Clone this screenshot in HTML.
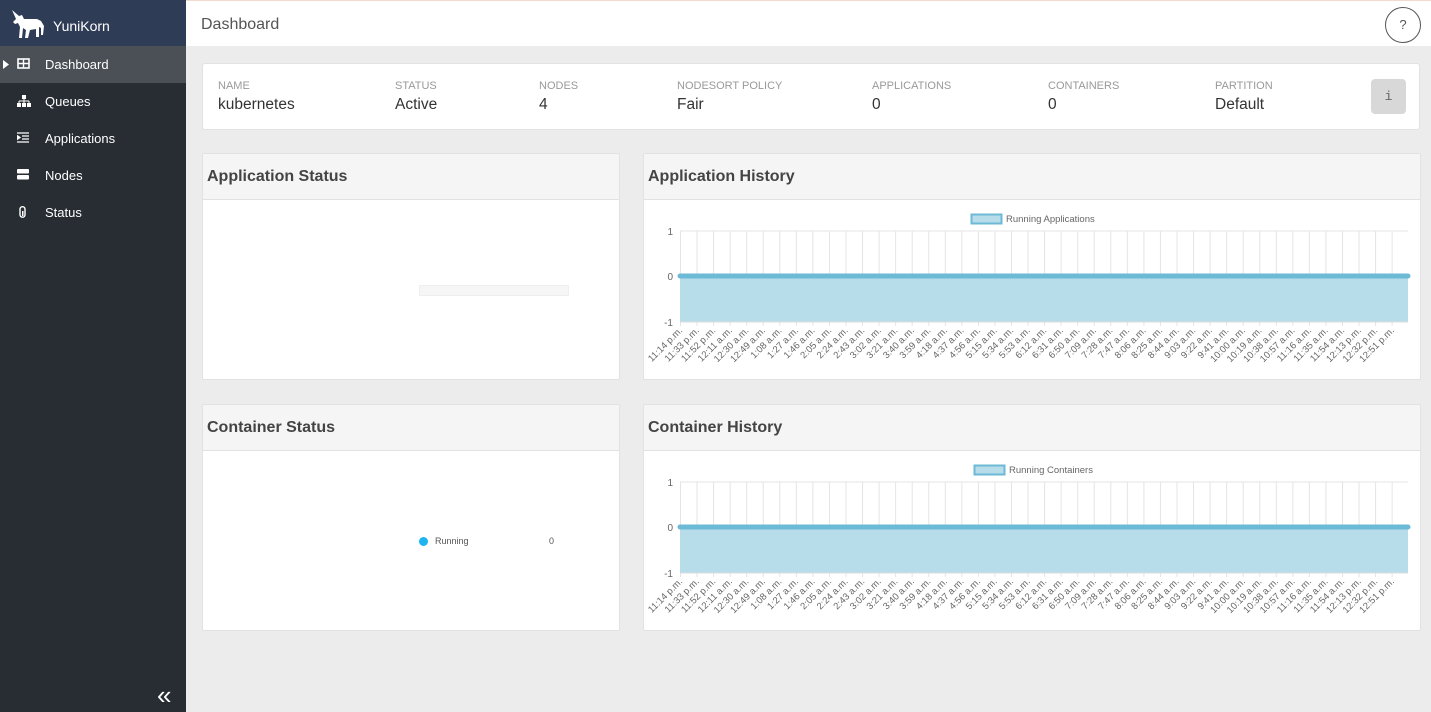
<!DOCTYPE html>
<html><head><meta charset="utf-8"><style>
*{box-sizing:border-box;margin:0;padding:0}
body{width:1431px;height:712px;overflow:hidden;background:#ececec;font-family:"Liberation Sans",Arial,sans-serif;position:relative}
.abs{position:absolute}
#side{left:0;top:0;width:186px;height:712px;background:#282c33}
#brand{left:0;top:0;width:186px;height:46px;background:#2f3c56;color:#fff;font-size:14px}
.item{position:absolute;left:0;width:186px;height:37px;color:#fff;font-size:13px;line-height:37px}
.item span{position:absolute;left:45px}
.item svg{position:absolute;left:17px;top:12px}
#top{left:186px;top:0;width:1245px;height:46px;background:#fff;border-top:1px solid #f3d9d0}
.card{position:absolute;background:#fff;border:1px solid #e2e2e2;border-radius:2px}
.hdr{position:absolute;left:0;top:0;right:0;height:46px;background:#f5f5f5;border-bottom:1px solid #e2e2e2;font-weight:bold;font-size:16px;color:#444;line-height:46px;padding-left:4px}
.lb{position:absolute;top:16px;font-size:11px;color:#999}
.vl{position:absolute;top:32px;font-size:15.5px;color:#333}
svg text{font-family:"Liberation Sans",Arial,sans-serif}
</style></head><body>
<div id="side" class="abs">
 <div id="brand" class="abs">
  <svg class="abs" style="left:10px;top:9px" width="36" height="30" viewBox="0 0 36 30"><path d="M2 1 L9 7 L12 6 L14 10 L27 10 L31 12 L34 17 L33 26 L31 26 L31 19 L29 18 L29 28 L26 28 L26 20 L20 21 L18 29 L15 29 L16 21 L13 19 L12 29 L9 29 L10 18 L8 14 L5 15 L3 13 L6 10 Z" fill="#fff"/></svg>
  <span class="abs" style="left:53px;top:18px">YuniKorn</span>
 </div>
 <div class="item" style="top:46px;background:#4b4f56"><svg style="left:3px;top:14px" width="6" height="9"><path d="M0 0 L6 4.5 L0 9Z" fill="#fff"/></svg><svg width="13" height="11"><rect x="1" y="1" width="11" height="9" fill="none" stroke="#fff" stroke-width="1.6"/><path d="M6.5 1V10M1 5.5H12" stroke="#fff" stroke-width="1.4"/></svg><span>Dashboard</span></div>
 <div class="item" style="top:83px"><svg width="14" height="12"><rect x="5" y="0" width="4" height="4" fill="#fff"/><path d="M7 4V6M2 6H12M2 6V8M12 6V8M7 6V8" stroke="#fff"/><rect x="0" y="8" width="4" height="4" fill="#fff"/><rect x="5" y="8" width="4" height="4" fill="#fff"/><rect x="10" y="8" width="4" height="4" fill="#fff"/></svg><span>Queues</span></div>
 <div class="item" style="top:120px"><svg width="12" height="11"><path d="M0 1H12M5 4H12M5 7H12M0 10H12M0 3.5L3 5.5L0 7.5Z" stroke="#fff" stroke-width="1.3" fill="#fff"/></svg><span>Applications</span></div>
 <div class="item" style="top:157px"><svg width="12" height="11"><rect x="0" y="0" width="12" height="4.5" rx="1" fill="#fff"/><rect x="0" y="6" width="12" height="4.5" rx="1" fill="#fff"/></svg><span>Nodes</span></div>
 <div class="item" style="top:194px"><svg width="8" height="12" style="left:19px"><rect x="1" y="0.7" width="5" height="10.5" rx="2.5" fill="none" stroke="#fff" stroke-width="1.4"/><rect x="3" y="5" width="1.5" height="5" fill="#fff"/></svg><span>Status</span></div>
 <div class="abs" style="left:157px;top:682px;color:#fff;font-size:26px;line-height:26px">«</div>
</div>
<div id="top" class="abs">
 <span class="abs" style="left:15px;top:15px;font-size:16px;color:#555">Dashboard</span>
 <div class="abs" style="left:1199px;top:6px;width:36px;height:36px;border:1px solid #555;border-radius:50%;text-align:center;line-height:34px;font-size:13px;color:#555">?</div>
</div>
<div class="card" style="left:202px;top:63px;width:1218px;height:67px;border-radius:3px">
 <div class="lb" style="left:15px">NAME</div><div class="vl" style="left:15px">kubernetes</div>
 <div class="lb" style="left:192px">STATUS</div><div class="vl" style="left:192px">Active</div>
 <div class="lb" style="left:336px">NODES</div><div class="vl" style="left:336px">4</div>
 <div class="lb" style="left:474px">NODESORT POLICY</div><div class="vl" style="left:474px">Fair</div>
 <div class="lb" style="left:669px">APPLICATIONS</div><div class="vl" style="left:669px">0</div>
 <div class="lb" style="left:845px">CONTAINERS</div><div class="vl" style="left:845px">0</div>
 <div class="lb" style="left:1012px">PARTITION</div><div class="vl" style="left:1012px">Default</div>
 <div class="abs" style="left:1168px;top:15px;width:35px;height:35px;background:#d8d8d8;border-radius:4px;text-align:center;line-height:35px;font-size:13px;color:#666;font-family:'Liberation Mono',monospace">i</div>
</div>
<div class="card" style="left:202px;top:153px;width:418px;height:227px"><div class="hdr">Application Status</div>
 <div class="abs" style="left:216px;top:131px;width:150px;height:11px;background:#f6f6f6;border:1px solid #eee"></div></div>
<div class="card" style="left:202px;top:404px;width:418px;height:227px"><div class="hdr">Container Status</div>
 <div class="abs" style="left:216px;top:132px;width:9px;height:9px;border-radius:50%;background:#1eb4f0"></div>
 <div class="abs" style="left:232px;top:131px;font-size:9px;color:#555">Running</div>
 <div class="abs" style="left:346px;top:131px;font-size:9px;color:#555">0</div></div>

<div class="card" style="left:643px;top:153px;width:778px;height:227px"><div class="hdr">Application History</div></div>
<div class="card" style="left:643px;top:404px;width:778px;height:227px"><div class="hdr">Container History</div></div>

<svg class="abs" style="left:643px;top:200px" width="778" height="180" id="c1">
<defs><pattern id="g" x="37" y="0" width="16.55" height="200" patternUnits="userSpaceOnUse"><line x1="0.5" y1="0" x2="0.5" y2="200" stroke="#e4e4e4"/></pattern></defs>
<rect x="37" y="31" width="728" height="95" fill="url(#g)"/>
<rect x="37" y="76" width="728" height="46" fill="#b7dcea"/>
<line x1="37" y1="31" x2="765" y2="31" stroke="#e6e6e6"/>
<line x1="37" y1="122" x2="765" y2="122" stroke="#ddd"/>
<line x1="37" y1="76" x2="765" y2="76" stroke="#6dbad6" stroke-width="5" stroke-linecap="round"/>
<g font-size="10" fill="#666" text-anchor="end"><text x="30" y="35">1</text><text x="30" y="80">0</text><text x="30" y="126">-1</text></g>
<rect x="328.5" y="14.5" width="30" height="9" fill="#b7dcea" stroke="#6dbad6" stroke-width="2"/>
<text x="363" y="22" font-size="9.5" fill="#666">Running Applications</text>
<g font-size="9.5" fill="#666" text-anchor="end">
<text transform="translate(40,131) rotate(-45)">11:14 p.m.</text>
<text transform="translate(56.6,131) rotate(-45)">11:33 p.m.</text>
<text transform="translate(73.1,131) rotate(-45)">11:52 p.m.</text>
<text transform="translate(89.7,131) rotate(-45)">12:11 a.m.</text>
<text transform="translate(106.2,131) rotate(-45)">12:30 a.m.</text>
<text transform="translate(122.8,131) rotate(-45)">12:49 a.m.</text>
<text transform="translate(139.3,131) rotate(-45)">1:08 a.m.</text>
<text transform="translate(155.9,131) rotate(-45)">1:27 a.m.</text>
<text transform="translate(172.4,131) rotate(-45)">1:46 a.m.</text>
<text transform="translate(189,131) rotate(-45)">2:05 a.m.</text>
<text transform="translate(205.5,131) rotate(-45)">2:24 a.m.</text>
<text transform="translate(222.1,131) rotate(-45)">2:43 a.m.</text>
<text transform="translate(238.6,131) rotate(-45)">3:02 a.m.</text>
<text transform="translate(255.2,131) rotate(-45)">3:21 a.m.</text>
<text transform="translate(271.7,131) rotate(-45)">3:40 a.m.</text>
<text transform="translate(288.3,131) rotate(-45)">3:59 a.m.</text>
<text transform="translate(304.8,131) rotate(-45)">4:18 a.m.</text>
<text transform="translate(321.4,131) rotate(-45)">4:37 a.m.</text>
<text transform="translate(337.9,131) rotate(-45)">4:56 a.m.</text>
<text transform="translate(354.5,131) rotate(-45)">5:15 a.m.</text>
<text transform="translate(371,131) rotate(-45)">5:34 a.m.</text>
<text transform="translate(387.6,131) rotate(-45)">5:53 a.m.</text>
<text transform="translate(404.1,131) rotate(-45)">6:12 a.m.</text>
<text transform="translate(420.7,131) rotate(-45)">6:31 a.m.</text>
<text transform="translate(437.2,131) rotate(-45)">6:50 a.m.</text>
<text transform="translate(453.8,131) rotate(-45)">7:09 a.m.</text>
<text transform="translate(470.3,131) rotate(-45)">7:28 a.m.</text>
<text transform="translate(486.9,131) rotate(-45)">7:47 a.m.</text>
<text transform="translate(503.4,131) rotate(-45)">8:06 a.m.</text>
<text transform="translate(520,131) rotate(-45)">8:25 a.m.</text>
<text transform="translate(536.5,131) rotate(-45)">8:44 a.m.</text>
<text transform="translate(553.1,131) rotate(-45)">9:03 a.m.</text>
<text transform="translate(569.6,131) rotate(-45)">9:22 a.m.</text>
<text transform="translate(586.2,131) rotate(-45)">9:41 a.m.</text>
<text transform="translate(602.7,131) rotate(-45)">10:00 a.m.</text>
<text transform="translate(619.3,131) rotate(-45)">10:19 a.m.</text>
<text transform="translate(635.8,131) rotate(-45)">10:38 a.m.</text>
<text transform="translate(652.4,131) rotate(-45)">10:57 a.m.</text>
<text transform="translate(668.9,131) rotate(-45)">11:16 a.m.</text>
<text transform="translate(685.5,131) rotate(-45)">11:35 a.m.</text>
<text transform="translate(702,131) rotate(-45)">11:54 a.m.</text>
<text transform="translate(718.6,131) rotate(-45)">12:13 p.m.</text>
<text transform="translate(735.1,131) rotate(-45)">12:32 p.m.</text>
<text transform="translate(751.7,131) rotate(-45)">12:51 p.m.</text>
</g>
</svg>

<svg class="abs" style="left:643px;top:451px" width="778" height="180">
<rect x="37" y="31" width="728" height="95" fill="url(#g)"/>
<rect x="37" y="76" width="728" height="46" fill="#b7dcea"/>
<line x1="37" y1="31" x2="765" y2="31" stroke="#e6e6e6"/>
<line x1="37" y1="122" x2="765" y2="122" stroke="#ddd"/>
<line x1="37" y1="76" x2="765" y2="76" stroke="#6dbad6" stroke-width="5" stroke-linecap="round"/>
<g font-size="10" fill="#666" text-anchor="end"><text x="30" y="35">1</text><text x="30" y="80">0</text><text x="30" y="126">-1</text></g>
<rect x="331.5" y="14.5" width="30" height="9" fill="#b7dcea" stroke="#6dbad6" stroke-width="2"/>
<text x="366" y="22" font-size="9.5" fill="#666">Running Containers</text>
<g font-size="9.5" fill="#666" text-anchor="end">
<text transform="translate(40,131) rotate(-45)">11:14 p.m.</text>
<text transform="translate(56.6,131) rotate(-45)">11:33 p.m.</text>
<text transform="translate(73.1,131) rotate(-45)">11:52 p.m.</text>
<text transform="translate(89.7,131) rotate(-45)">12:11 a.m.</text>
<text transform="translate(106.2,131) rotate(-45)">12:30 a.m.</text>
<text transform="translate(122.8,131) rotate(-45)">12:49 a.m.</text>
<text transform="translate(139.3,131) rotate(-45)">1:08 a.m.</text>
<text transform="translate(155.9,131) rotate(-45)">1:27 a.m.</text>
<text transform="translate(172.4,131) rotate(-45)">1:46 a.m.</text>
<text transform="translate(189,131) rotate(-45)">2:05 a.m.</text>
<text transform="translate(205.5,131) rotate(-45)">2:24 a.m.</text>
<text transform="translate(222.1,131) rotate(-45)">2:43 a.m.</text>
<text transform="translate(238.6,131) rotate(-45)">3:02 a.m.</text>
<text transform="translate(255.2,131) rotate(-45)">3:21 a.m.</text>
<text transform="translate(271.7,131) rotate(-45)">3:40 a.m.</text>
<text transform="translate(288.3,131) rotate(-45)">3:59 a.m.</text>
<text transform="translate(304.8,131) rotate(-45)">4:18 a.m.</text>
<text transform="translate(321.4,131) rotate(-45)">4:37 a.m.</text>
<text transform="translate(337.9,131) rotate(-45)">4:56 a.m.</text>
<text transform="translate(354.5,131) rotate(-45)">5:15 a.m.</text>
<text transform="translate(371,131) rotate(-45)">5:34 a.m.</text>
<text transform="translate(387.6,131) rotate(-45)">5:53 a.m.</text>
<text transform="translate(404.1,131) rotate(-45)">6:12 a.m.</text>
<text transform="translate(420.7,131) rotate(-45)">6:31 a.m.</text>
<text transform="translate(437.2,131) rotate(-45)">6:50 a.m.</text>
<text transform="translate(453.8,131) rotate(-45)">7:09 a.m.</text>
<text transform="translate(470.3,131) rotate(-45)">7:28 a.m.</text>
<text transform="translate(486.9,131) rotate(-45)">7:47 a.m.</text>
<text transform="translate(503.4,131) rotate(-45)">8:06 a.m.</text>
<text transform="translate(520,131) rotate(-45)">8:25 a.m.</text>
<text transform="translate(536.5,131) rotate(-45)">8:44 a.m.</text>
<text transform="translate(553.1,131) rotate(-45)">9:03 a.m.</text>
<text transform="translate(569.6,131) rotate(-45)">9:22 a.m.</text>
<text transform="translate(586.2,131) rotate(-45)">9:41 a.m.</text>
<text transform="translate(602.7,131) rotate(-45)">10:00 a.m.</text>
<text transform="translate(619.3,131) rotate(-45)">10:19 a.m.</text>
<text transform="translate(635.8,131) rotate(-45)">10:38 a.m.</text>
<text transform="translate(652.4,131) rotate(-45)">10:57 a.m.</text>
<text transform="translate(668.9,131) rotate(-45)">11:16 a.m.</text>
<text transform="translate(685.5,131) rotate(-45)">11:35 a.m.</text>
<text transform="translate(702,131) rotate(-45)">11:54 a.m.</text>
<text transform="translate(718.6,131) rotate(-45)">12:13 p.m.</text>
<text transform="translate(735.1,131) rotate(-45)">12:32 p.m.</text>
<text transform="translate(751.7,131) rotate(-45)">12:51 p.m.</text>
</g>
</svg>
</body></html>
